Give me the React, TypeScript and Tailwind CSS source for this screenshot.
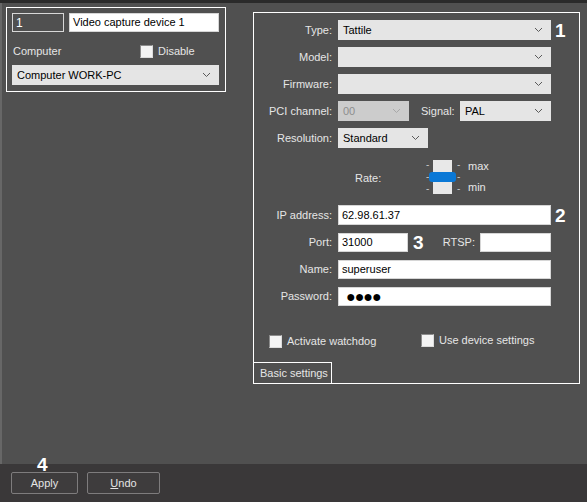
import React from 'react';

const Chevron: React.FC<{ light?: boolean }> = ({ light }) => (
  <svg width="9" height="6" viewBox="0 0 9 6" className="shrink-0">
    <polyline points="1,1 4.5,4.5 8,1" fill="none" stroke={light ? '#a8a8a8' : '#5a5a5a'} strokeWidth="1" />
  </svg>
);

const Select: React.FC<{ value?: string; w: string; disabled?: boolean }> = ({ value = '', w, disabled }) => (
  <div
    className={`${w} h-[20px] flex items-center justify-between pl-[4px] pr-[7px] border shrink-0 ${
      disabled ? 'bg-[#cccccc] border-[#cccccc] text-[#8e8e8e]' : 'bg-[#e5e5e5] border-[#e5e5e5] text-black'
    }`}
  >
    <span>{value}</span>
    <Chevron light={disabled} />
  </div>
);

const Field: React.FC<{ value?: React.ReactNode; w: string; h?: string; pl?: string }> = ({
  value = '',
  w,
  h = 'h-[20px]',
  pl = 'pl-[3px]',
}) => (
  <div className={`${w} ${h} ${pl} bg-white border border-[#d6d6d6] flex items-center text-black shrink-0`}>{value}</div>
);

const Check: React.FC = () => (
  <div className="w-[13px] h-[13px] bg-[#f4f4f4] border border-t-[#8c8c8c] border-l-[#8c8c8c] border-r-[#dcdcdc] border-b-[#dcdcdc] shrink-0" />
);

const Label: React.FC<{ children: React.ReactNode }> = ({ children }) => (
  <div className="w-[79px] text-right pr-[1px] text-[#e6e6e6] shrink-0">{children}</div>
);

const Mark: React.FC<{ n: string; className?: string }> = ({ n, className = '' }) => (
  <span className={`text-white font-bold text-[19px] leading-none ${className}`}>{n}</span>
);

export default function App() {
  return (
    <div
      className="relative w-[587px] h-[502px] flex flex-col bg-[#505050] text-[11px] overflow-hidden"
      style={{ fontFamily: '"Liberation Sans", Arial, sans-serif' }}
    >
      <div className="h-[3px] bg-[#2a2a2a]" />
      <div className="flex-1 flex items-start border-l-2 border-[#676767]">
        {/* left panel */}
        <div className="ml-[4px] mt-[4px] w-[220px] h-[85px] border border-white flex flex-col px-[5px] pt-[5px]">
          <div className="flex gap-[5px]">
            <div className="w-[52px] h-[19px] border border-[#d8d8d8] flex items-center pl-[3px] text-white text-[12px]">1</div>
            <Field value="Video capture device 1" w="w-[150px]" h="h-[19px]" />
          </div>
          <div className="flex items-center mt-[12px] h-[14px] text-[#e6e6e6]">
            <span className="pl-[1px] w-[128px]">Computer</span>
            <Check />
            <span className="ml-[5px]">Disable</span>
          </div>
          <div className="mt-[7px]">
            <Select value="Computer WORK-PC" w="w-[207px]" />
          </div>
        </div>

        {/* right panel */}
        <div className="ml-[27px] mt-[9px] w-[327px] h-[372px] border border-white flex flex-col pt-[7px]">
          <div className="flex flex-col gap-[7px]">
            <div className="flex items-center gap-[5px]">
              <Label>Type:</Label>
              <Select value="Tattile" w="w-[213px]" />
              <Mark n="1" className="-ml-[1px]" />
            </div>
            <div className="flex items-center gap-[5px]">
              <Label>Model:</Label>
              <Select w="w-[213px]" />
            </div>
            <div className="flex items-center gap-[5px]">
              <Label>Firmware:</Label>
              <Select w="w-[213px]" />
            </div>
            <div className="flex items-center">
              <Label>PCI channel:</Label>
              <div className="ml-[5px]">
                <Select value="00" w="w-[71px]" disabled />
              </div>
              <span className="ml-[12px] w-[39px] text-[#e6e6e6]">Signal:</span>
              <Select value="PAL" w="w-[91px]" />
            </div>
            <div className="flex items-center gap-[5px]">
              <Label>Resolution:</Label>
              <Select value="Standard" w="w-[90px]" />
            </div>
          </div>

          {/* rate slider */}
          <div className="flex items-center h-[44px] mt-[7px] text-[#e6e6e6]">
            <span className="ml-[101px] w-[71px] mt-[3px]">Rate:</span>
            <div className="flex flex-col justify-between h-[34px] w-[6px] text-[#c8c8c8] text-[10px] leading-none">
              <span>-</span>
              <span>-</span>
              <span>-</span>
            </div>
            <div className="relative w-[19px] h-[34px] bg-[#e8e8e8] ml-[1px]">
              <div className="absolute left-[-4px] top-[12px] w-[27px] h-[10px] rounded-[3px] bg-[#0a78d6]" />
            </div>
            <div className="flex flex-col justify-between h-[34px] w-[6px] ml-[5px] text-[#c8c8c8] text-[10px] leading-none">
              <span>-</span>
              <span>-</span>
              <span>-</span>
            </div>
            <div className="flex flex-col justify-between h-[32px] ml-[5px] -mt-[1px] leading-none">
              <span>max</span>
              <span>min</span>
            </div>
          </div>

          <div className="flex flex-col gap-[8px] mt-[6px]">
            <div className="flex items-center gap-[5px]">
              <Label>IP address:</Label>
              <Field value="62.98.61.37" w="w-[213px]" />
              <Mark n="2" className="-ml-[1px]" />
            </div>
            <div className="flex items-center">
              <Label>Port:</Label>
              <div className="ml-[5px]">
                <Field value="31000" w="w-[70px]" h="h-[19px]" />
              </div>
              <div className="w-[67px] flex items-center justify-between pl-[5px]">
                <Mark n="3" />
                <span className="text-[#e6e6e6]">RTSP:</span>
              </div>
              <div className="ml-[5px]">
                <Field w="w-[71px]" h="h-[19px]" />
              </div>
            </div>
            <div className="flex items-center gap-[5px]">
              <Label>Name:</Label>
              <Field value="superuser" w="w-[213px]" h="h-[19px]" />
            </div>
            <div className="flex items-center gap-[5px]">
              <Label>Password:</Label>
              <Field
                value={<span className="text-[16px] tracking-[-1px] leading-none">●●●●</span>}
                w="w-[213px]"
                h="h-[19px]"
                pl="pl-[7px]"
              />
            </div>
          </div>

          <div className="flex items-center mt-[27px] text-[#e6e6e6]">
            <div className="ml-[15px] flex items-center gap-[5px] w-[152px]">
              <Check />
              <span>Activate watchdog</span>
            </div>
            <div className="flex items-center gap-[5px] -mt-[2px]">
              <Check />
              <span>Use device settings</span>
            </div>
          </div>

          <div className="mt-auto w-[78px] h-[21px] border-t border-r border-white flex items-center pl-[6px] text-[#e6e6e6] whitespace-nowrap">
            Basic settings
          </div>
        </div>
      </div>

      {/* bottom bar */}
      <div className="h-[38px] bg-[#3a3839] flex items-start pt-[8px] pl-[11px] gap-[9px]">
        <button className="w-[67px] h-[22px] rounded-[2px] border border-[#7e7c7d] bg-[#3e3c3d] text-[#e4e4e4]">Apply</button>
        <button className="w-[73px] h-[22px] rounded-[2px] border border-[#7e7c7d] bg-[#3e3c3d] text-[#e4e4e4]">
          <span className="underline">U</span>ndo
        </button>
      </div>
      <Mark n="4" className="absolute left-[37px] top-[455px]" />
    </div>
  );
}
